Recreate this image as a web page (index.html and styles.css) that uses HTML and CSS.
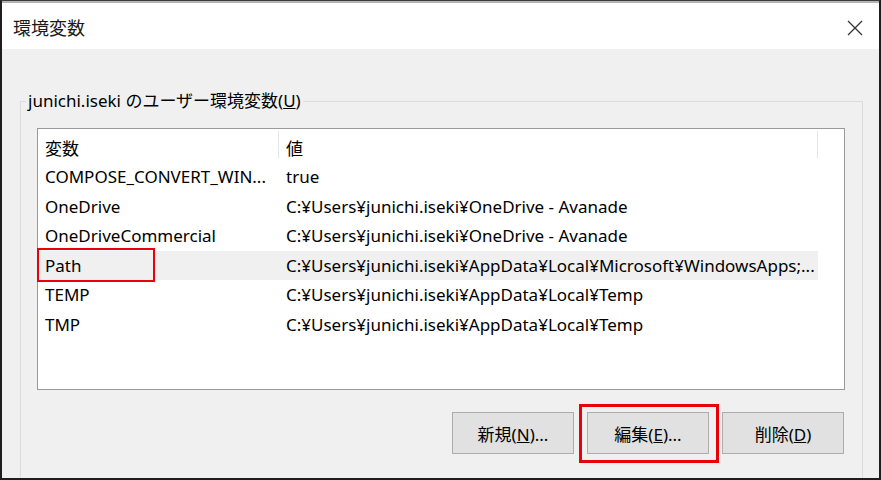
FILE: index.html
```html
<!DOCTYPE html>
<html lang="ja">
<head>
<meta charset="utf-8">
<title>環境変数</title>
<link rel="stylesheet" href="styles.css">
</head>
<body>
<div class="window">
  <div class="titlebar">
    <span class="title">環境変数</span>
    <svg class="close" width="16" height="16" viewBox="0 0 16 16"><path d="M1 1L15 15M15 1L1 15" stroke="#333" stroke-width="1.3" fill="none"/></svg>
  </div>
  <div class="body">
    <fieldset class="group">
      <legend>junichi.iseki のユーザー環境変数(<u>U</u>)</legend>
      <div class="group-inner">
        <div class="list">
          <div class="header">
            <div class="c1">変数</div>
            <div class="c2">値</div>
          </div>
          <div class="row"><div class="c1">COMPOSE_CONVERT_WIN...</div><div class="c2">true</div></div>
          <div class="row"><div class="c1">OneDrive</div><div class="c2">C:¥Users¥junichi.iseki¥OneDrive - Avanade</div></div>
          <div class="row"><div class="c1">OneDriveCommercial</div><div class="c2">C:¥Users¥junichi.iseki¥OneDrive - Avanade</div></div>
          <div class="row selected"><div class="c1">Path</div><div class="c2">C:¥Users¥junichi.iseki¥AppData¥Local¥Microsoft¥WindowsApps;...</div></div>
          <div class="row"><div class="c1">TEMP</div><div class="c2">C:¥Users¥junichi.iseki¥AppData¥Local¥Temp</div></div>
          <div class="row"><div class="c1">TMP</div><div class="c2">C:¥Users¥junichi.iseki¥AppData¥Local¥Temp</div></div>
          <div class="mark mark-path"></div>
        </div>
        <div class="buttons">
          <button class="btn">新規(<u>N</u>)...</button>
          <button class="btn btn-marked">編集(<u>E</u>)...<span class="mark mark-edit"></span></button>
          <button class="btn">削除(<u>D</u>)</button>
        </div>
      </div>
    </fieldset>
  </div>
</div>
</body>
</html>
```

FILE: styles.css
```css
html, body {
  margin: 0;
  padding: 0;
}
body {
  width: 881px;
  height: 480px;
  overflow: hidden;
  background: #f0f0f0;
  font-family: "Noto Sans", "Noto Sans CJK JP", sans-serif;
  font-size: 17px;
  color: #000;
}
.window {
  box-sizing: border-box;
  width: 881px;
  height: 480px;
  overflow: hidden;
  border-top: 1px solid #3c3c3c;
  border-left: 2px solid #1e1e1e;
  border-right: 2px solid #1e1e1e;
  border-bottom: 2px solid #1e1e1e;
  background: #f0f0f0;
  display: flex;
  flex-direction: column;
}
.titlebar {
  height: 46px;
  flex: none;
  border-top: 2px solid #b4b4b4;
  background: #fff;
  display: flex;
  align-items: center;
  justify-content: space-between;
  padding: 0 16px 0 11px;
}
.title {
  font-size: 18px;
  color: #1a1a1a;
  margin-top: 2px;
}
.close {
  display: block;
  margin-top: 3px;
}
.body {
  padding: 40px 0 0 18px;
}
.group {
  margin: 0;
  padding: 0;
  width: 841px;
  height: 420px;
  border: 1px solid #dcdcdc;
  min-inline-size: 0;
}
.group legend {
  margin-left: 5px;
  padding: 0 2px;
  font-size: 17px;
  line-height: 24px;
}
.group-inner {
  padding: 15px 17px 0 16px;
}
.list {
  position: relative;
  height: 260px;
  border: 1px solid #9a9a9a;
  background: #fff;
}
.header {
  display: flex;
  height: 33px;
  align-items: stretch;
}
.header .c1, .header .c2 {
  padding-top: 4px;
  border-right: 1px solid #e5e5e5;
  margin-top: 2px;
  height: 27px;
}
.row {
  display: flex;
  height: 29.5px;
  align-items: center;
  width: 780px;
}
.c1 {
  box-sizing: border-box;
  width: 241px;
  padding-left: 7px;
  white-space: nowrap;
}
.c2 {
  box-sizing: border-box;
  width: 539px;
  padding-left: 7px;
  white-space: nowrap;
}
.row.selected {
  background: #f0f0f0;
}
.mark {
  position: absolute;
  box-sizing: border-box;
  border: 2px solid #e8000b;
  pointer-events: none;
}
.mark-path {
  left: -1px;
  top: 119px;
  width: 118px;
  height: 34px;
}
.buttons {
  display: flex;
  justify-content: flex-end;
  gap: 13px;
  margin-top: 22px;
  padding-right: 1px;
}
.btn {
  position: relative;
  box-sizing: border-box;
  width: 122px;
  height: 42px;
  background: #e1e1e1;
  border: 1px solid #adadad;
  font-family: inherit;
  font-size: 17px;
  color: #000;
  padding: 0;
}
.mark-edit {
  left: -9px;
  top: -9px;
  width: 140px;
  height: 59px;
  border-width: 3px;
}
```
